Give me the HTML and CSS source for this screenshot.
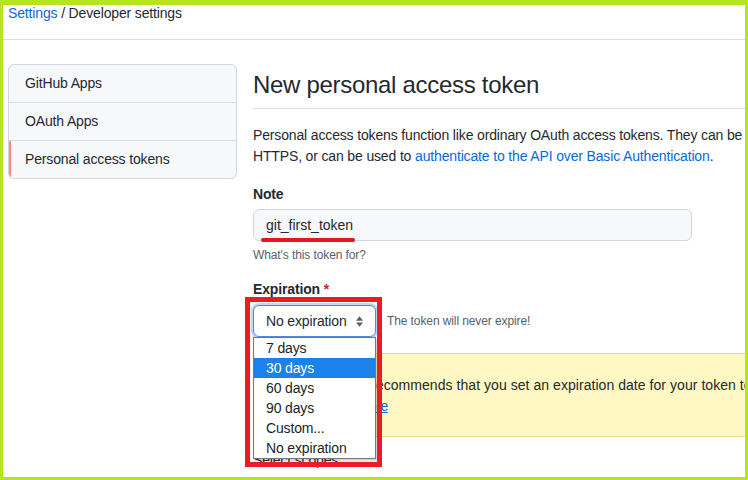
FILE: index.html
```html
<!DOCTYPE html>
<html>
<head>
    <meta charset="UTF-8">
    <title>New personal access token</title>
    <link rel="stylesheet" href="styles.css">
</head>
<body>
    <div class="frame">
        <div class="breadcrumb">
            <a href="#">Settings</a> / Developer settings
        </div>
        <hr class="page-rule">

        <div class="layout">
            <nav class="side-menu">
                <a class="menu-item" href="#">GitHub Apps</a>
                <a class="menu-item" href="#">OAuth Apps</a>
                <a class="menu-item selected" href="#">Personal access tokens</a>
            </nav>

            <div class="main">
                <h2 class="subhead">New personal access token</h2>
                <p class="lead">
                    Personal access tokens function like ordinary OAuth access tokens. They can be used instead of a password for Git over<br>
                    HTTPS, or can be used to <a href="#">authenticate to the API over Basic Authentication</a>.
                </p>

                <div class="form-group">
                    <label class="form-label">Note</label>
                    <div class="note-field">
                        <input class="form-control" type="text" value="git_first_token">
                        <span class="mark-underline"></span>
                    </div>
                    <p class="note">What's this token for?</p>
                </div>

                <div class="form-group expiration">
                    <label class="form-label">Expiration <span class="required">*</span></label>
                    <div class="expiry-row">
                        <div class="select-box">
                            No expiration
                            <svg class="select-arrow" width="7" height="11" viewBox="0 0 8 12">
                                <path d="M4 0 L8 5 H0 Z M4 12 L0 7 H8 Z" fill="#57606a"/>
                            </svg>
                        </div>
                        <span class="note expiry-note">The token will never expire!</span>
                    </div>

                    <ul class="select-menu">
                        <li>7 days</li>
                        <li class="highlighted">30 days</li>
                        <li>60 days</li>
                        <li>90 days</li>
                        <li>Custom...</li>
                        <li>No expiration</li>
                    </ul>
                    <span class="mark-box"></span>
                </div>

                <div class="flash-warn">
                    GitHub strongly recommends that you set an expiration date for your token to help keep your information<br>
                    secure. <a href="#">Learn more</a>
                </div>

                <h3 class="scopes">Select scopes</h3>
            </div>
        </div>
    </div>
</body>
</html>
```

FILE: styles.css
```css
body {
    margin: 0;
    font-family: -apple-system, "Segoe UI", "Liberation Sans", Arial, sans-serif;
    font-size: 14px;
    line-height: 1.5;
    letter-spacing: -0.15px;
    color: #24292f;
    background: #ffffff;
}

a {
    color: #0969da;
    text-decoration: none;
}

.frame {
    width: 748px;
    height: 480px;
    box-sizing: border-box;
    border: 3px solid #b5e61d;
    border-top-width: 5px;
    background: #ffffff;
    overflow: hidden;
}

.breadcrumb {
    padding: 1px 0 0 5px;
    line-height: 14px;
    white-space: nowrap;
}

.page-rule {
    margin: 19px 0 0;
    border: none;
    border-top: 1px solid #d8dee4;
    width: 1100px;
}

.layout {
    display: flex;
    gap: 16px;
    padding: 24px 0 0 5px;
    align-items: flex-start;
}

.side-menu {
    flex: none;
    width: 229px;
    box-sizing: border-box;
    border: 1px solid #d0d7de;
    border-radius: 6px;
    background: #f6f8fa;
    overflow: hidden;
}

.menu-item {
    display: block;
    position: relative;
    padding: 8px 16px;
    height: 21px;
    color: #24292f;
    border-top: 1px solid #d8dee4;
}

.menu-item:first-child {
    border-top: none;
}

.menu-item.selected::before {
    content: "";
    position: absolute;
    left: 0;
    top: 0;
    bottom: 0;
    width: 2px;
    background: #fd8c73;
}

.main {
    flex: none;
    width: 900px;
}

.subhead {
    margin: 0;
    padding: 4px 0 6px;
    font-size: 24px;
    font-weight: 400;
    line-height: 34px;
    letter-spacing: -0.3px;
    border-bottom: 1px solid #d8dee4;
}

.lead {
    margin: 16px 0 0;
    white-space: nowrap;
}

.form-group {
    margin-top: 17px;
    position: relative;
}

.form-group.expiration {
    margin-top: 15px;
}

.form-label {
    display: block;
    font-weight: 600;
}

.note-field {
    position: relative;
    margin-top: 4px;
    width: 439px;
}

.form-control {
    display: block;
    width: 439px;
    height: 32px;
    box-sizing: border-box;
    padding: 5px 12px;
    font: inherit;
    color: #24292f;
    background: #f6f8fa;
    border: 1px solid #d0d7de;
    border-radius: 6px;
}

.mark-underline {
    position: absolute;
    left: 8px;
    top: 29px;
    width: 94px;
    height: 4px;
    border-radius: 2px;
    background: #e8141e;
}

.note {
    margin: 5px 0 0;
    font-size: 12px;
    line-height: 18px;
    letter-spacing: -0.1px;
    color: #57606a;
}

.required {
    color: #cf222e;
}

.expiry-row {
    display: flex;
    align-items: center;
    margin-top: 5px;
}

.select-box {
    display: flex;
    align-items: center;
    justify-content: space-between;
    width: 123px;
    height: 32px;
    box-sizing: border-box;
    padding: 0 12px;
    background: #ffffff;
    border: 1px solid #4c8ae8;
    border-radius: 6px;
    box-shadow: 0 0 0 2px rgba(9, 105, 218, 0.25);
}

.select-arrow {
    flex: none;
}

.expiry-note {
    margin: 0 0 0 11px;
}

.select-menu {
    position: absolute;
    left: 0;
    top: 58px;
    width: 123px;
    box-sizing: border-box;
    margin: 0;
    padding: 0;
    list-style: none;
    background: #ffffff;
    border: 1px solid #767676;
    box-shadow: 2px 2px 3px rgba(0, 0, 0, 0.2);
    color: #1b1f24;
}

.select-menu li {
    height: 20px;
    line-height: 20px;
    padding-left: 12px;
}

.select-menu li.highlighted {
    background: #1a82ea;
    color: #ffffff;
}

.mark-box {
    position: absolute;
    left: -8px;
    top: 18px;
    width: 137px;
    height: 170px;
    box-sizing: border-box;
    border: 5px solid #ed1c24;
}

.flash-warn {
    margin-top: 16px;
    padding: 21px 16px 19px;
    background: #fff8c5;
    border: 1px solid #ecd68a;
    border-radius: 6px;
    white-space: nowrap;
    letter-spacing: 0.05px;
}

.flash-warn a {
    text-decoration: underline;
    letter-spacing: -0.4px;
}

.scopes {
    margin: 13px 0 0;
    font-size: 14px;
    font-weight: 400;
}
```
